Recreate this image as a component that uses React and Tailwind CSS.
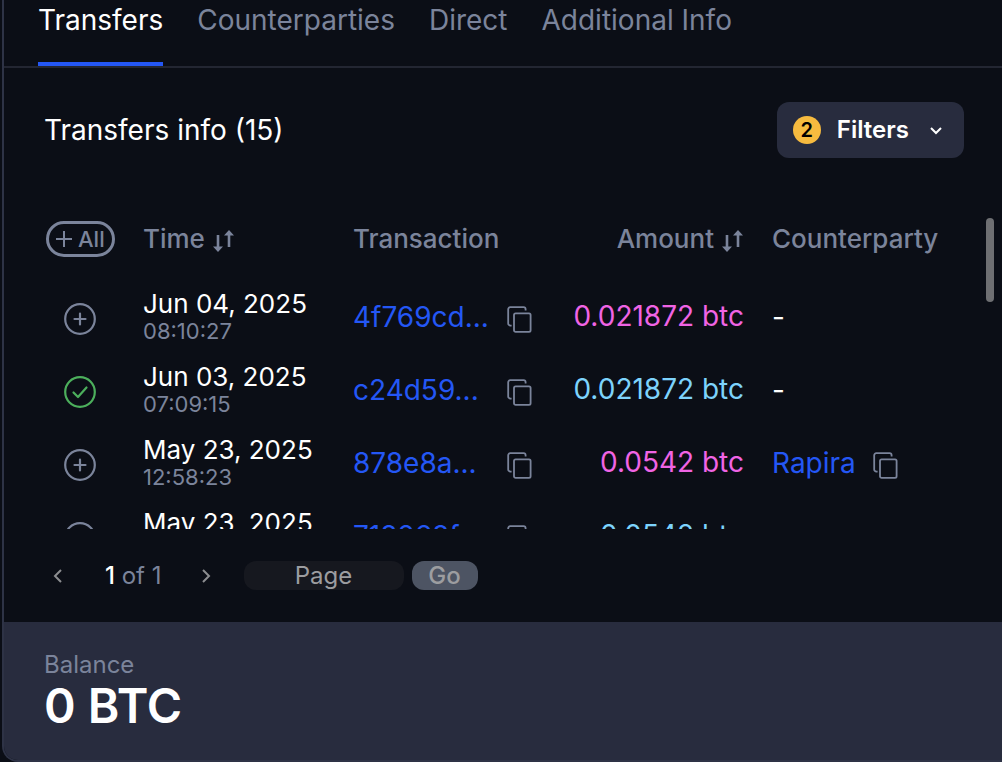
import React, { useState } from 'react';

const tabs = ['Transfers', 'Counterparties', 'Direct', 'Additional Info'];

const transfers = [
  { id: 1, date: 'Jun 04, 2025', time: '08:10:27', hash: '4f769cd...', amount: '0.021872 btc', incoming: false, party: null, checked: false },
  { id: 2, date: 'Jun 03, 2025', time: '07:09:15', hash: 'c24d59...', amount: '0.021872 btc', incoming: true, party: null, checked: true },
  { id: 3, date: 'May 23, 2025', time: '12:58:23', hash: '878e8a...', amount: '0.0542 btc', incoming: false, party: 'Rapira', checked: false },
  { id: 4, date: 'May 23, 2025', time: '12:41:07', hash: '718268f...', amount: '0.0542 btc', incoming: true, party: null, checked: false },
];

const SortIcon = () => (
  <svg width="22" height="22" viewBox="0 0 22 22" fill="none" aria-hidden="true" className="mt-1.5 shrink-0">
    <path d="M5 5v13M16 17V4" stroke="currentColor" strokeWidth="2.6" />
    <path d="M0 16.5h10L5 22zM11 5.5h10L16 0z" fill="currentColor" />
  </svg>
);

const CopyButton = ({ label }) => (
  <button type="button" aria-label={label} className="mt-1.5 text-[#7b849b]">
    <svg width="25" height="27" viewBox="0 0 25 27" fill="none" stroke="currentColor" strokeWidth="1.8">
      <rect x="7" y="7.4" width="16.6" height="18.4" rx="1.6" />
      <path d="M4.6 19.6H3.4a2.2 2.2 0 0 1-2.2-2.2V3.2a2 2 0 0 1 2-2h13.4a2 2 0 0 1 2 2V4.6" />
    </svg>
  </button>
);

const Chevron = ({ d, className }) => (
  <svg width="16" height="16" viewBox="0 0 16 16" fill="none" stroke="currentColor" strokeWidth="2" aria-hidden="true" className={className}>
    <path d={d} />
  </svg>
);

const TransferRow = ({ transfer, checked, onToggle }) => (
  <tr className="h-[73px]">
    <td>
      <button
        type="button"
        onClick={onToggle}
        aria-label={checked ? 'Remove transfer' : 'Add transfer'}
        className={checked ? 'ml-5 block text-[#4caf5c]' : 'ml-5 block text-[#7b849b]'}
      >
        <svg width="32" height="32" viewBox="0 0 32 32" fill="none" stroke="currentColor" strokeWidth="2.2" strokeLinecap="round" strokeLinejoin="round">
          <circle cx="16" cy="16" r="14.8" />
          {checked ? <path d="M9.5 16.5l4.5 4.5 8.5-9.5" /> : <path d="M10.5 16h11M16 10.5v11" />}
        </svg>
      </button>
    </td>
    <td className="pb-1">
      <div className="text-[26px] leading-7 text-white">{transfer.date}</div>
      <div className="text-[22px] leading-[26px] text-[#7b849b]">{transfer.time}</div>
    </td>
    <td className="pb-1">
      <div className="flex items-center">
        <a href="#tx" className="w-[154px] text-[28px] leading-8 text-[#2457f5]">{transfer.hash}</a>
        <CopyButton label="Copy transaction" />
      </div>
    </td>
    <td className={transfer.incoming ? 'pb-1.5 text-right text-[28px] leading-8 text-[#7dd3fc]' : 'pb-1.5 text-right text-[28px] leading-8 text-[#f064e4]'}>
      {transfer.amount}
    </td>
    <td className="pb-1 pl-7 text-[28px] leading-8">
      {transfer.party ? (
        <div className="flex items-center gap-[17px]">
          <a href="#party" className="text-[#2457f5]">{transfer.party}</a>
          <CopyButton label="Copy counterparty" />
        </div>
      ) : (
        <span className="text-white">-</span>
      )}
    </td>
  </tr>
);

export default function App() {
  const [activeTab, setActiveTab] = useState('Transfers');
  const [selected, setSelected] = useState(transfers.filter((t) => t.checked).map((t) => t.id));
  const [page, setPage] = useState('');

  const toggle = (id) => {
    setSelected((prev) => (prev.includes(id) ? prev.filter((s) => s !== id) : [...prev, id]));
  };

  return (
    <div className="bg-[#0b0e16] pl-0.5 font-['Inter',sans-serif]">
      <div className="overflow-hidden rounded-bl-2xl border-b-2 border-l-2 border-[#2e3346]">
        {/* Tabs */}
        <nav className="flex gap-[34px] border-b-2 border-[#232632] pl-[34px]">
          {tabs.map((tab) => (
            <button
              key={tab}
              type="button"
              onClick={() => setActiveTab(tab)}
              className={
                tab === activeTab
                  ? 'border-b-4 border-[#2457f5] pb-[22px] text-[28px] leading-10 text-white'
                  : 'border-b-4 border-transparent pb-[22px] text-[28px] leading-10 text-[#7b849b]'
              }
            >
              {tab}
            </button>
          ))}
        </nav>

        <section className="px-10 pt-[34px]">
          <div className="flex items-center justify-between">
            <h2 className="text-[28px] text-white">Transfers info (15)</h2>
            <button type="button" className="-mr-0.5 flex h-14 items-center rounded-xl bg-[#282c3e] pr-5 pl-4 text-white">
              <span className="flex size-7 items-center justify-center rounded-full bg-[#f7bb3f] text-xl font-semibold text-black">2</span>
              <span className="ml-4 text-2xl font-semibold">Filters</span>
              <Chevron d="M3 6l5 5 5-5" className="ml-[19px]" />
            </button>
          </div>
        </section>

        {/* Transfers list */}
        <div className="relative mt-[38px] h-[333px] overflow-hidden pl-10">
          <table className="w-full table-fixed text-left">
            <thead>
              <tr className="h-[86px] text-[26px] text-[#7b849b]">
                <th className="w-[99px]">
                  <button type="button" className="ml-0.5 flex h-9 items-center gap-1.5 rounded-full border-3 border-[#7b849b] px-[7px] text-[22px] font-medium">
                    <svg width="16" height="16" viewBox="0 0 16 16" stroke="currentColor" strokeWidth="2" aria-hidden="true">
                      <path d="M0 8h16M8 0v16" />
                    </svg>
                    All
                  </button>
                </th>
                <th className="w-[210px] pb-0.5 font-medium">
                  <button type="button" className="flex items-center gap-2">Time <SortIcon /></button>
                </th>
                <th className="w-[200px] pb-0.5 font-medium">Transaction</th>
                <th className="w-[191px] pb-0.5 font-medium">
                  <button type="button" className="ml-auto flex items-center gap-2">Amount <SortIcon /></button>
                </th>
                <th className="pb-0.5 pl-7 font-medium">Counterparty</th>
              </tr>
            </thead>
            <tbody>
              {transfers.map((transfer) => (
                <TransferRow
                  key={transfer.id}
                  transfer={transfer}
                  checked={selected.includes(transfer.id)}
                  onToggle={() => toggle(transfer.id)}
                />
              ))}
            </tbody>
          </table>
          <div className="absolute top-[22px] right-2 h-[84px] w-2 rounded-full bg-[#6e6f72]" />
        </div>

        {/* Pagination */}
        <form onSubmit={(e) => e.preventDefault()} className="flex items-center py-8 pl-[47px] text-2xl">
          <button type="button" aria-label="Previous page" className="text-[#8c8d90]">
            <Chevron d="M10 2L4 8l6 6" />
          </button>
          <div className="ml-[38px] leading-7 text-[#7b849b]">
            <span className="font-medium text-white">1</span> of 1
          </div>
          <button type="button" aria-label="Next page" className="ml-9 text-[#8c8d90]">
            <Chevron d="M5 2l6 6-6 6" />
          </button>
          <input
            type="text"
            aria-label="Page"
            placeholder="Page"
            value={page}
            onChange={(e) => setPage(e.target.value)}
            className="ml-[30px] h-[29px] w-40 rounded-xl bg-[#16181f] text-center text-white placeholder:text-[#9c9da0]"
          />
          <button type="submit" className="ml-2 h-[29px] w-[66px] rounded-xl bg-[#4d5463] leading-7 font-medium text-[#9c9da0]">Go</button>
        </form>

        <footer className="bg-[#282c3e] px-10 py-7">
          <div className="text-2xl leading-[30px] text-[#7b849b]">Balance</div>
          <div className="text-5xl leading-[52px] font-semibold text-white">0 BTC</div>
        </footer>
      </div>
    </div>
  );
}
